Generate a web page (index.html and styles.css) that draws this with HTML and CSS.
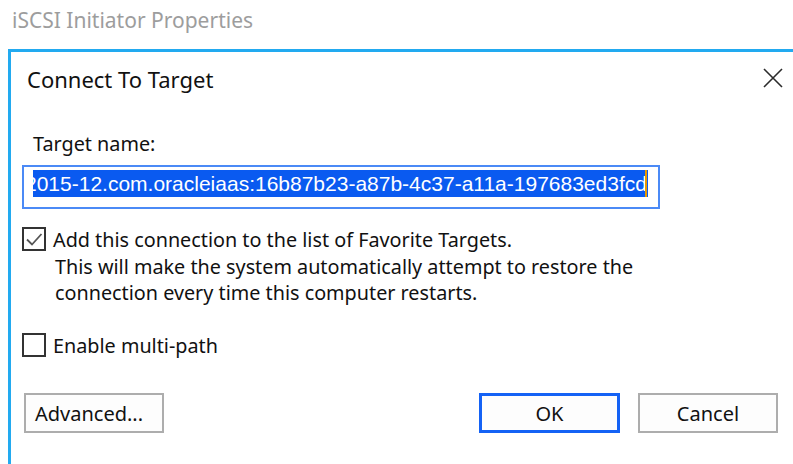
FILE: index.html
```html
<!DOCTYPE html>
<html>
<head>
<meta charset="utf-8">
<link rel="stylesheet" href="styles.css">
</head>
<body>
<div class="parent-title">iSCSI Initiator Properties</div>
<div class="dialog">
  <div class="titlebar">
    <span class="title">Connect To Target</span>
    <svg class="close" width="20" height="20" viewBox="0 0 20 20"><path d="M1 1L19 19M19 1L1 19" stroke="#2b2b2b" stroke-width="1.6" fill="none"/></svg>
  </div>
  <div class="body">
    <div class="label">Target name:</div>
    <div class="textbox">
      <div class="clip"><span class="sel">2015-12.com.oracleiaas:16b87b23-a87b-4c37-a11a-197683ed3fcd</span><span class="caret"></span></div>
    </div>
    <div class="check first">
      <span class="box"><svg width="20" height="20" viewBox="0 0 20 20"><path d="M3 10.5L8 15.5L17.5 5" stroke="#555" stroke-width="1.8" fill="none"/></svg></span>
      <span class="check-text">Add this connection to the list of Favorite Targets.</span>
    </div>
    <p class="note">This will make the system automatically attempt to restore the<br>connection every time this computer restarts.</p>
    <div class="check second">
      <span class="box"></span>
      <span class="check-text">Enable multi-path</span>
    </div>
    <div class="buttons">
      <button class="btn advanced">Advanced...</button>
      <div class="spacer"></div>
      <button class="btn default">OK</button>
      <button class="btn cancel">Cancel</button>
    </div>
  </div>
</div>
</body>
</html>
```

FILE: styles.css
```css
html, body {
  margin: 0;
  padding: 0;
  background: #ffffff;
  overflow: hidden;
  height: 100%;
}
body {
  font-family: "Noto Sans", "Open Sans", sans-serif;
  color: #111;
}
.parent-title {
  height: 49px;
  box-sizing: border-box;
  padding: 5px 0 0 12px;
  font-size: 21px;
  line-height: 30px;
  color: #9d9d9d;
}
.dialog {
  margin-left: 8px;
  border-top: 3px solid #22aaf0;
  border-left: 3px solid #22aaf0;
  height: 420px;
  background: #fff;
}
.titlebar {
  display: flex;
  justify-content: space-between;
  align-items: flex-start;
  height: 52px;
  padding: 0 10px 0 16px;
  box-sizing: border-box;
}
.title {
  font-size: 22px;
  line-height: 30px;
  padding-top: 12px;
}
.close {
  margin-top: 16px;
  display: block;
}
.body {
  padding: 0 15px 0 11px;
  font-size: 19.8px;
  line-height: 27px;
  display: flex;
  flex-direction: column;
  align-items: flex-start;
}
.label {
  margin: 26px 0 0 11px;
}
.textbox {
  margin-top: 8px;
  width: 638px;
  height: 44px;
  box-sizing: border-box;
  border: 2px solid #4b8af6;
  padding: 3px 10px 10px 9px;
}
.clip {
  overflow: hidden;
  height: 27px;
  white-space: nowrap;
  display: flex;
}
.sel {
  margin-left: -8px;
  background: #0a5af0;
  color: #fff;
  font-family: "Liberation Sans", Arial, sans-serif;
  font-size: 21px;
  line-height: 27px;
  padding-right: 1px;
}
.caret {
  width: 2px;
  height: 27px;
  background: #e89a00;
  margin-left: -3px;
  flex: none;
}
.check {
  display: flex;
  align-items: flex-start;
}
.check.first {
  margin-top: 17px;
}
.check.second {
  margin-top: 26px;
}
.box {
  width: 24px;
  height: 24px;
  box-sizing: border-box;
  border: 2px solid #333;
  margin: 1px 7px 0 0;
  display: flex;
  align-items: center;
  justify-content: center;
  flex: none;
}
.box svg {
  display: block;
}
.note {
  margin: 1px 0 0 33px;
  line-height: 26px;
}
.buttons {
  margin-top: 34px;
  display: flex;
  align-self: stretch;
  padding-left: 2px;
}
.spacer {
  flex: 1;
}
.btn {
  height: 40px;
  width: 140px;
  box-sizing: border-box;
  border: 2px solid #adadad;
  background: #fdfdfd;
  font-family: "Noto Sans", "Open Sans", sans-serif;
  font-size: 20px;
  color: #111;
  padding: 0;
  margin: 0;
}
.btn.advanced {
  text-align: left;
  padding-left: 9px;
}
.btn.default {
  width: 141px;
  border: 3px solid #1462f5;
  margin-right: 18px;
}
```
